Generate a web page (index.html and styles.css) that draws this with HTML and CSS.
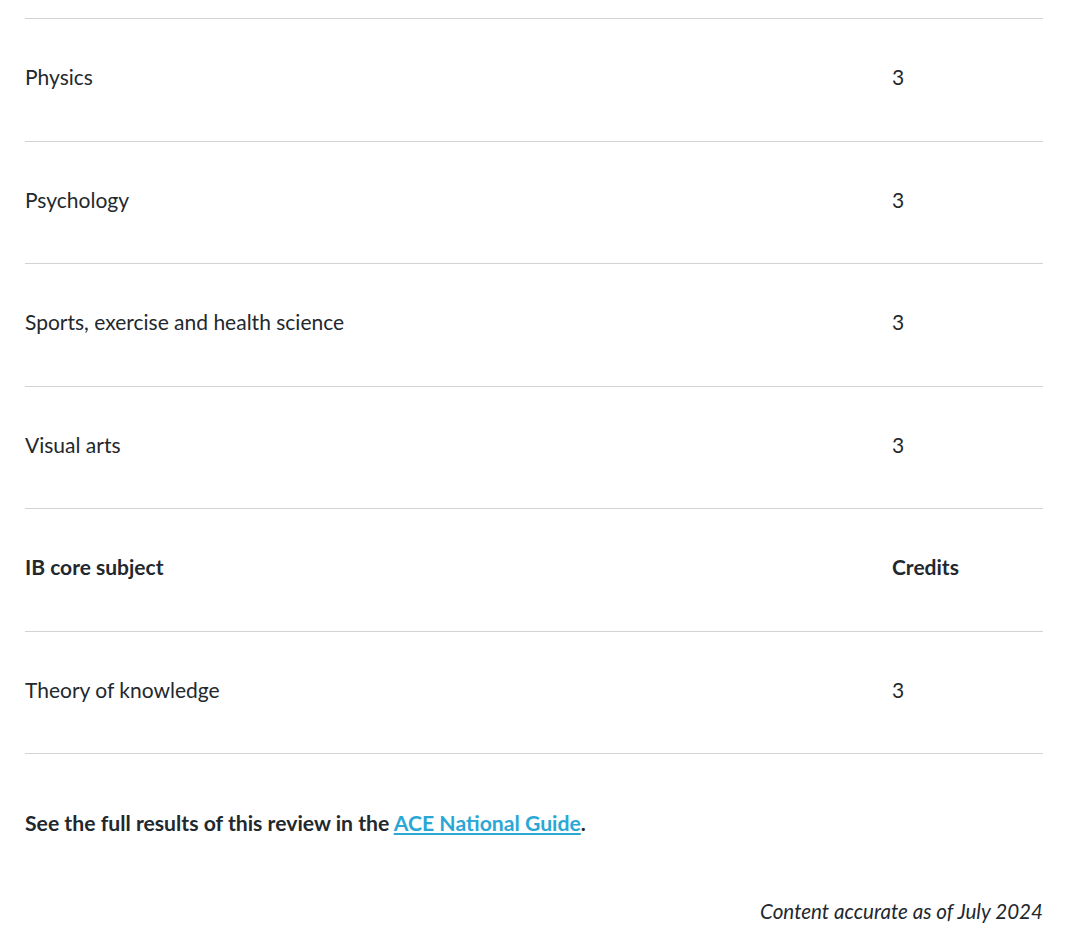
FILE: index.html
```html
<!DOCTYPE html>
<html lang="en">
<head>
<meta charset="utf-8">
<title>IB credits</title>
<link rel="stylesheet" href="styles.css">
</head>
<body>
<main class="content">
  <table class="credits">
    <tbody>
      <tr><td class="subject">Physics</td><td class="value">3</td></tr>
      <tr><td class="subject">Psychology</td><td class="value">3</td></tr>
      <tr><td class="subject">Sports, exercise and health science</td><td class="value">3</td></tr>
      <tr><td class="subject">Visual arts</td><td class="value">3</td></tr>
      <tr class="head"><th class="subject">IB core subject</th><th class="value">Credits</th></tr>
      <tr><td class="subject">Theory of knowledge</td><td class="value">3</td></tr>
    </tbody>
  </table>
  <p class="note">See the full results of this review in the <a href="#" class="link">ACE National Guide</a>.</p>
  <p class="accuracy">Content accurate as of July 2024</p>
</main>
</body>
</html>
```
FILE: styles.css
```css
html, body {
  margin: 0;
  padding: 0;
  background: #ffffff;
}
body {
  font-family: Lato, "Open Sans", sans-serif;
  color: #22282d;
}
.content {
  padding: 18px 37px 0 25px;
}
.credits {
  width: 100%;
  border-collapse: collapse;
}
.credits tr {
  border-top: 1px solid #d3d3d3;
  border-bottom: 1px solid #d3d3d3;
}
.credits td,
.credits th {
  padding: 46px 0 51px;
  font-size: 21px;
  line-height: 24.5px;
  text-align: left;
  vertical-align: middle;
}
.credits td { font-weight: 400; }
.credits th { font-weight: 700; }
.credits .subject {
  width: 867px;
}
.note {
  margin: 57px 0 0;
  font-size: 21.2px;
  line-height: 24px;
  font-weight: 700;
}
.link {
  color: #2ba7d6;
  text-decoration: underline;
  text-decoration-thickness: 2px;
  text-underline-offset: 2px;
}
.accuracy {
  margin: 64px 0 0;
  text-align: right;
  font-style: italic;
  font-size: 20.6px;
  line-height: 24px;
}
```
